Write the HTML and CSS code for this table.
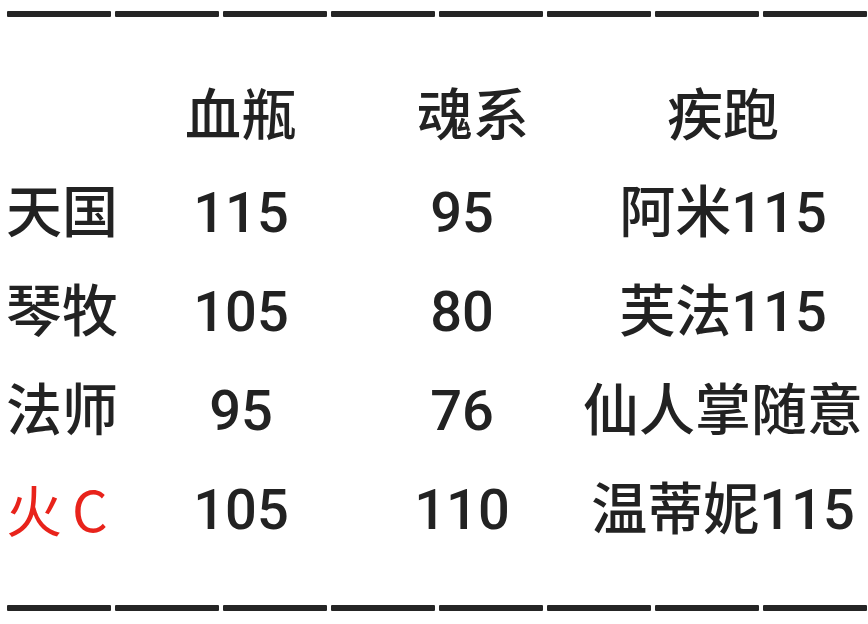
FILE: index.html
```html
<!DOCTYPE html>
<html lang="zh-CN">
<head>
<meta charset="utf-8">
<title>表</title>
<link rel="stylesheet" href="styles.css">
</head>
<body>
<div class="dashes top">
  <span></span><span></span><span></span><span></span><span></span><span></span><span></span><span></span>
</div>
<div class="table">
  <div class="row head">
    <div class="cell label"></div>
    <div class="cell">血瓶</div>
    <div class="cell c3h">魂系</div>
    <div class="cell">疾跑</div>
  </div>
  <div class="row">
    <div class="cell label">天国</div>
    <div class="cell">115</div>
    <div class="cell">95</div>
    <div class="cell">阿米115</div>
  </div>
  <div class="row">
    <div class="cell label">琴牧</div>
    <div class="cell">105</div>
    <div class="cell">80</div>
    <div class="cell">芙法115</div>
  </div>
  <div class="row">
    <div class="cell label">法师</div>
    <div class="cell">95</div>
    <div class="cell">76</div>
    <div class="cell">仙人掌随意</div>
  </div>
  <div class="row">
    <div class="cell label red">火C</div>
    <div class="cell">105</div>
    <div class="cell">110</div>
    <div class="cell">温蒂妮115</div>
  </div>
</div>
<div class="dashes bottom">
  <span></span><span></span><span></span><span></span><span></span><span></span><span></span><span></span>
</div>
</body>
</html>
```

FILE: styles.css
```css
html, body {
  margin: 0;
  padding: 0;
  background: #ffffff;
}
body {
  width: 868px;
  height: 624px;
  overflow: hidden;
  font-family: Roboto, "Noto Sans CJK SC", sans-serif;
  color: #222222;
}
.dashes {
  display: flex;
  gap: 4px;
  padding-left: 7px;
}
.dashes span {
  display: block;
  width: 104px;
  height: 6px;
  background: #252525;
  border-radius: 1px;
}
.dashes.top {
  margin-top: 11px;
}
.dashes.bottom {
  margin-top: 45px;
}
.table {
  margin-top: 51px;
}
.row {
  display: grid;
  grid-template-columns: 130px 222px 220px 296px;
  height: 99px;
  line-height: 99px;
  font-size: 56px;
  font-weight: 500;
}
.row.head {
  height: 96px;
  line-height: 96px;
}
.cell {
  text-align: center;
  white-space: nowrap;
}
.cell:nth-child(4) {
  padding-left: 6px;
}
.cell.label {
  text-align: left;
  padding-left: 6px;
}
.cell.c3h {
  padding-left: 22px;
}
.cell.red {
  color: #e8231b;
  font-family: "Noto Sans CJK SC", sans-serif;
  font-weight: 400;
  letter-spacing: 10px;
  position: relative;
  top: -3px;
}
```
